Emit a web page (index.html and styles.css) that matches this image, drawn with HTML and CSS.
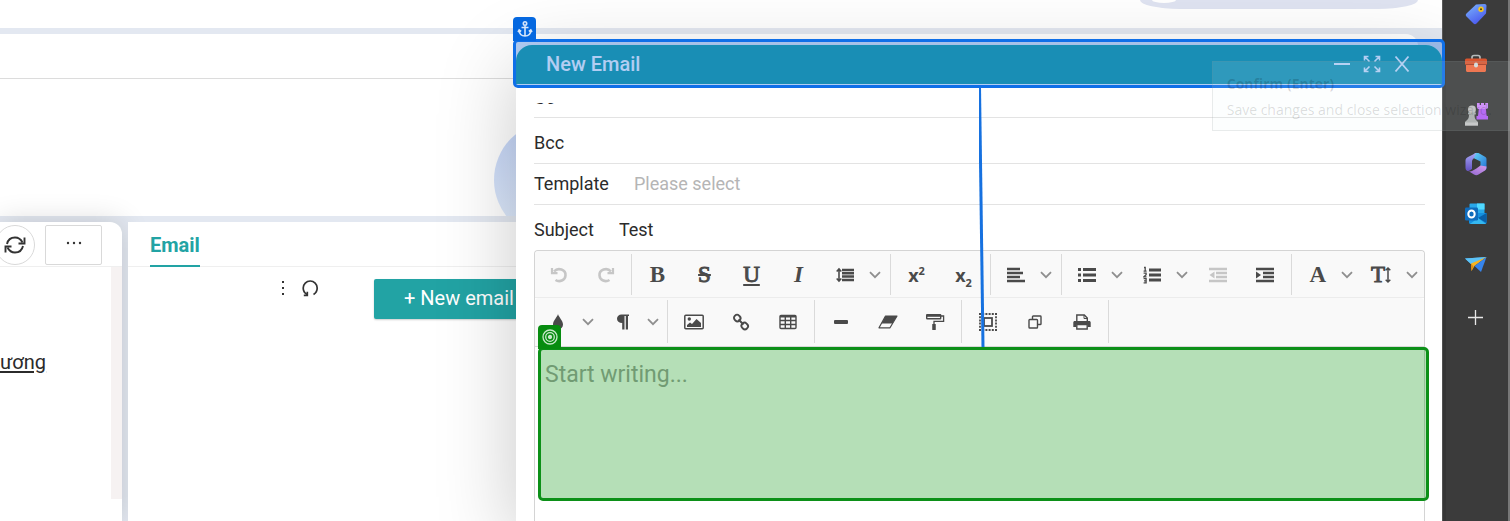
FILE: index.html
```html
<!DOCTYPE html>
<html lang="en">
<head>
<meta charset="utf-8">
<title>New Email</title>
<link rel="stylesheet" href="styles.css">
</head>
<body>
<div class="app">
  <main class="workspace">
    <header class="topbar"><div class="search-pill"><span class="pill-dot"></span></div></header>
    <section class="summary">
      <div class="summary-head"></div>
      <div class="summary-body"><span class="avatar"></span></div>
    </section>
    <div class="panels">
      <section class="side-panel">
        <div class="side-tools">
          <button class="round-btn" aria-label="Refresh"><svg width="22" height="18" viewBox="0 0 22 18" fill="none" stroke="#333" stroke-width="1.9"><path d="M3 8C4 3.500 7.500 1.500 11 1.500c3.500 0 6 2 7.500 5"/><path d="M20.500 1.500v6h-6"/><path d="M19 10c-1 4.500-4.500 6.500-8 6.500-3.500 0-6-2-7.500-5"/><path d="M1.500 16.500v-6h6"/></svg></button>
          <button class="more-btn" aria-label="More"><svg width="16" height="4" viewBox="0 0 16 4" fill="#333"><circle cx="2" cy="2" r="1.200"/><circle cx="8" cy="2" r="1.200"/><circle cx="14" cy="2" r="1.200"/></svg></button>
        </div>
        <div class="side-body">
          <a class="person" href="#">ương</a>
          <span class="scroll-track"></span>
        </div>
      </section>
      <section class="mail-panel">
        <nav class="tabs"><a class="tab" href="#">Email</a></nav>
        <div class="mail-tools">
          <button class="plain-btn" aria-label="Options"><svg width="4" height="16" viewBox="0 0 4 16" fill="#333"><rect x="1" y="1" width="2" height="2"/><rect x="1" y="7" width="2" height="2"/><rect x="1" y="13" width="2" height="2"/></svg></button>
          <button class="plain-btn" aria-label="Reload"><svg width="18" height="18" viewBox="0 0 18 18" fill="none" stroke="#333" stroke-width="1.700"><path d="M12.500 15.500C15 14 16.200 11.800 16.200 9A7 7 0 0 0 2.200 9c0 2.800 1.300 5 3.800 6.500"/><path d="M2.800 16.300h3.500v-3.500"/></svg></button>
          <button class="new-mail">+ New email</button>
        </div>
      </section>
    </div>

    <section class="dialog" role="dialog" aria-labelledby="dialog-title">
      <header class="dialog-head">
        <h1 id="dialog-title" class="dialog-title">New Email</h1>
        <div class="window-controls">
          <button class="win-btn" aria-label="Minimize"><svg width="18" height="18" viewBox="0 0 18 18" stroke="#fff" stroke-width="2"><path d="M1 9h16"/></svg></button>
          <button class="win-btn" aria-label="Expand"><svg width="18" height="18" viewBox="0 0 18 18" fill="none" stroke="#fff" stroke-width="1.600"><path d="M1.500 5.500v-4h4M1.500 1.500l5 5M12.500 1.500h4v4M16.500 1.500l-5 5M1.500 12.500v4h4M1.500 16.500l5-5M12.500 16.500h4v-4M16.500 16.500l-5-5"/></svg></button>
          <button class="win-btn" aria-label="Close"><svg width="18" height="18" viewBox="0 0 18 18" stroke="#fff" stroke-width="1.900"><path d="M2.500 1.500l13 15M15.500 1.500l-13 15"/></svg></button>
        </div>
        <div class="anchor-mark">
          <span class="mark-tag anchor-tag"><svg width="16" height="18" viewBox="0 0 16 18" fill="none" stroke="#d6e6fb" stroke-width="1.600"><circle cx="8" cy="3.500" r="1.700"/><path d="M8 5.500v10.500M4.500 7.500h7M2 10c.3 4 3 6 6 6s5.700-2 6-6M1 12l1.200-2 2 1.400M15 12l-1.200-2-2 1.400"/></svg></span>
        </div>
      </header>
      <div class="fields">
        <div class="field cc-field"><label for="cc">Cc</label><input id="cc" type="text"></div>
        <div class="field bcc-field"><label for="bcc">Bcc</label><input id="bcc" type="text"></div>
        <div class="field template-field"><label for="template">Template</label><select id="template"><option>Please select</option></select></div>
        <div class="field subject-field"><label for="subject">Subject</label><input id="subject" type="text" value="Test"></div>
      </div>
      <div class="editor">
        <div class="tool-row">
          <div class="group">
            <button class="tool dim" aria-label="Undo"><svg width="18" height="18" viewBox="0 0 18 18" fill="none" stroke="currentColor" stroke-width="2.600"><path d="M4 5.500C8 1 16 3.500 15.500 9.500c-.4 5-6 7-10 4.500"/><path d="M2 2v5.200h5.500" stroke-width="2.200"/></svg></button>
            <button class="tool dim" aria-label="Redo"><svg width="18" height="18" viewBox="0 0 18 18" fill="none" stroke="currentColor" stroke-width="2.600"><path d="M14 5.500C10 1 2 3.500 2.500 9.500c.4 5 6 7 10 4.500"/><path d="M16 2v5.200h-5.500" stroke-width="2.200"/></svg></button>
          </div>
          <div class="group">
            <button class="tool glyph" aria-label="Bold">B</button>
            <button class="tool glyph strike" aria-label="Strikethrough">S</button>
            <button class="tool glyph under" aria-label="Underline">U</button>
            <button class="tool glyph ital" aria-label="Italic">I</button>
            <button class="tool drop" aria-label="Line height"><svg width="18" height="16" viewBox="0 0 18 16" fill="none" stroke="currentColor"><path d="M6 3h12M6 6.300h12M6 9.600h12M6 13h12" stroke-width="2.500"/><path d="M3 2v12M.7 4.500L3 2l2.300 2.500M.7 11.500L3 14l2.300-2.500" stroke-width="1.600"/></svg><svg class="chev" width="12" height="8" viewBox="0 0 12 8"><path d="M1 1.200l5 5 5-5"/></svg></button>
          </div>
          <div class="group">
            <button class="tool script" aria-label="Superscript"><span>x<sup>2</sup></span></button>
            <button class="tool script" aria-label="Subscript"><span>x<sub>2</sub></span></button>
          </div>
          <div class="group">
            <button class="tool drop" aria-label="Align"><svg width="18" height="16" viewBox="0 0 18 16" stroke="currentColor" stroke-width="2.600"><path d="M0 2h13M0 6h16M0 10h13M0 14h18"/></svg><svg class="chev" width="12" height="8" viewBox="0 0 12 8"><path d="M1 1.200l5 5 5-5"/></svg></button>
          </div>
          <div class="group">
            <button class="tool drop" aria-label="Bulleted list"><svg width="18" height="16" viewBox="0 0 18 16" stroke="currentColor" stroke-width="2.900"><path d="M5 2.500h13M5 8h13M5 13.500h13M0 2.500h3M0 8h3M0 13.500h3"/></svg><svg class="chev" width="12" height="8" viewBox="0 0 12 8"><path d="M1 1.200l5 5 5-5"/></svg></button>
            <button class="tool drop" aria-label="Numbered list"><svg width="18" height="18" viewBox="0 0 18 18" fill="none" stroke="currentColor"><path d="M6 4h12M6 9h12M6 14h12" stroke-width="2.900"/><path d="M1 1.500h1.200v3.700M.6 5.200h3M.6 7.200h2.500v1.500L.8 10.800h2.700M.6 12.700h2.500v4.200H.6M1 14.800h2" stroke-width="1.300"/></svg><svg class="chev" width="12" height="8" viewBox="0 0 12 8"><path d="M1 1.200l5 5 5-5"/></svg></button>
            <button class="tool dim" aria-label="Outdent"><svg width="18" height="16" viewBox="0 0 18 16" fill="currentColor"><path d="M0 .8h18v2.500H0zM7 4.800h11v2.500H7zM7 8.800h11v2.500H7zM0 12.800h18v2.500H0zM5.500 4.500v7L.5 8z"/></svg></button>
            <button class="tool" aria-label="Indent"><svg width="18" height="16" viewBox="0 0 18 16" fill="currentColor"><path d="M0 .8h18v2.500H0zM7 4.800h11v2.500H7zM7 8.800h11v2.500H7zM0 12.800h18v2.500H0zM0 4.500v7L5 8z"/></svg></button>
          </div>
          <div class="group">
            <button class="tool drop glyph" aria-label="Font color">A<svg class="chev" width="12" height="8" viewBox="0 0 12 8"><path d="M1 1.200l5 5 5-5"/></svg></button>
            <button class="tool drop glyph size" aria-label="Font size"><span class="size-mark">T<svg width="6" height="18" viewBox="0 0 6 18" fill="none" stroke="currentColor" stroke-width="1.500"><path d="M3 2v14M.7 4.300L3 2l2.300 2.300M.7 13.700L3 16l2.300-2.300"/></svg></span><svg class="chev" width="12" height="8" viewBox="0 0 12 8"><path d="M1 1.200l5 5 5-5"/></svg></button>
          </div>
        </div>
        <div class="tool-row">
          <div class="group">
            <button class="tool drop" aria-label="Highlight"><svg width="18" height="18" viewBox="-3 0 18 18"><path fill="currentColor" d="M6 1c.6 3 5 6.500 5 10.500A5 5 0 0 1 6 16.500a5 5 0 0 1-5-5C1 7.500 5.400 4 6 1z"/></svg><svg class="chev" width="12" height="8" viewBox="0 0 12 8"><path d="M1 1.200l5 5 5-5"/></svg></button>
            <button class="tool drop" aria-label="Paragraph format"><svg width="18" height="16" viewBox="-2 0 18 16"><path fill="currentColor" d="M5.500.5H13V2h-1v13.500H9.800V2H8.500v13.500H6.200V9C3 9 1 7.500 1 4.800S3 .5 5.500.5z"/></svg><svg class="chev" width="12" height="8" viewBox="0 0 12 8"><path d="M1 1.200l5 5 5-5"/></svg></button>
          </div>
          <div class="group">
            <button class="tool" aria-label="Image"><svg width="20" height="16" viewBox="0 0 20 16"><rect x=".8" y="1.300" width="18.400" height="13.400" rx="1" fill="none" stroke="currentColor" stroke-width="1.500"/><circle cx="5.300" cy="5" r="1.700" fill="currentColor"/><path fill="currentColor" d="M3 13v-2l3-2.500 2 1.500 4.500-5L17 9v4z"/></svg></button>
            <button class="tool" aria-label="Link"><svg width="18" height="18" viewBox="0 0 18 18" fill="none" stroke="currentColor" stroke-width="1.900"><rect x="2" y="2" width="6.500" height="6" rx="2.800" transform="rotate(45 5.200 5)"/><rect x="9.500" y="10" width="6.500" height="6" rx="2.800" transform="rotate(45 12.700 13)"/><path d="M6.500 6.500l5 5"/></svg></button>
            <button class="tool" aria-label="Table"><svg width="18" height="16" viewBox="0 0 18 16" fill="none" stroke="currentColor" stroke-width="1.400"><rect x="1" y="1.500" width="16" height="13" rx="1"/><path d="M1 2.500h16" stroke-width="2"/><path d="M1 6.500h16M1 10.500h16M6.300 2v12.500M11.700 2v12.500"/></svg></button>
          </div>
          <div class="group">
            <button class="tool" aria-label="Horizontal rule"><svg width="14" height="4" viewBox="0 0 14 4"><rect width="14" height="4" rx="1" fill="currentColor"/></svg></button>
            <button class="tool" aria-label="Clear formatting"><svg width="20" height="14" viewBox="0 0 20 14"><path d="M7.500 1H19l-7 11.800H1L7.500 1z" fill="none" stroke="currentColor" stroke-width="1.200" stroke-linejoin="round"/><path d="M7.500 1H19l-4.500 7.500H3.500z" fill="currentColor"/></svg></button>
            <button class="tool" aria-label="Copy format"><svg width="20" height="18" viewBox="0 0 20 18" fill="none" stroke="currentColor"><rect x="1.700" y="1.700" width="14" height="4" rx=".5" stroke-width="1.400"/><path d="M1.500 2.700h14" stroke-width="2.200"/><path d="M16 3h2.600v5.300H9v3" stroke-width="1.300"/><rect x="7.800" y="11.500" width="2.400" height="5" fill="currentColor"/></svg></button>
          </div>
          <div class="group">
            <button class="tool" aria-label="Select all"><svg width="18" height="18" viewBox="0 0 18 18" fill="none" stroke="currentColor" stroke-width="1.800"><rect x="5" y="5" width="8" height="8"/><path d="M0 1h18M0 17h18M1 0v18M17 0v18" stroke-dasharray="2 1.200"/></svg></button>
            <button class="tool" aria-label="Preview"><svg width="14" height="14" viewBox="0 0 14 14" fill="none" stroke="currentColor" stroke-width="1.400"><rect x="1" y="4.500" width="8.500" height="8.500" rx=".8"/><path d="M4.500 4.500V1.700c0-.4.300-.7.700-.7h7c.4 0 .8.300.8.700v7c0 .4-.4.800-.8.800H9.500"/></svg></button>
            <button class="tool" aria-label="Print"><svg width="18" height="16" viewBox="0 0 18 16"><path d="M3.800 8V1h7.500l3 3v4" fill="none" stroke="currentColor" stroke-width="1.400"/><path d="M11 1v3.500h3.500" fill="none" stroke="currentColor"/><path fill="currentColor" d="M1.800 7h14.400c.9 0 1.500.6 1.500 1.500V13h-3v-2.500H3.300V13h-3V8.500C.3 7.600.9 7 1.800 7z"/><path d="M3.800 10.500h10.400V15H3.800z" fill="none" stroke="currentColor" stroke-width="1.400"/></svg></button>
          </div>
        </div>
        <div class="writing">
          <textarea class="writing-area" placeholder="Start writing..." aria-label="Message"></textarea>
          <div class="target-mark">
            <span class="mark-tag target-tag"><svg width="16" height="16" viewBox="0 0 16 16" fill="none" stroke="#c8e8ca" stroke-width="1.300"><circle cx="8" cy="8" r="7"/><circle cx="8" cy="8" r="4.300"/><circle cx="8" cy="8" r="1.500" fill="#c8e8ca"/></svg></span>
          </div>
        </div>
      </div>
      <svg class="link-line" width="8" height="260" viewBox="4 0 8 260"><path d="M4.500 0L8 260" stroke="#1671e0" stroke-width="3"/></svg>
    </section>
  </main>

  <aside class="dock">
    <button class="dock-btn" aria-label="Shopping"><svg width="24" height="24" viewBox="0 0 24 24"><defs><linearGradient id="tagFill" x1="0" y1="0" x2=".6" y2="1"><stop offset="0" stop-color="#7cb8fc"/><stop offset="1" stop-color="#4a58ee"/></linearGradient></defs><path d="M12 2.500L20.500 2c1.300 0 2 .7 2 2L22 11.500 12.500 21.500c-1 1-2 1-3 0l-7-7c-1-1-1-2 0-3z" fill="url(#tagFill)"/><circle cx="17" cy="7.300" r="2.700" fill="#f3c51e"/><circle cx="17" cy="7.300" r="1" fill="#493a10"/></svg></button>
    <button class="dock-btn" aria-label="Tools"><svg width="24" height="24" viewBox="0 0 24 24"><path d="M8 7V5.500C8 4 9 3.500 10 3.500h4c1 0 2 .5 2 2V7" fill="none" stroke="#b6bbbb" stroke-width="1.700"/><rect x="1" y="6.500" width="22" height="6.500" rx="1.500" fill="#d9552f"/><path d="M2 13h20v5.500c0 .8-.7 1.500-1.500 1.500h-17C2.700 20 2 19.300 2 18.500z" fill="#f0683e"/><path d="M1 12.500h22" stroke="#a8391e"/><rect x="10" y="10.500" width="4" height="5" rx="2" fill="#d5d9d9"/></svg></button>
    <button class="dock-btn" aria-label="Games"><svg width="24" height="24" viewBox="0 0 24 24"><path d="M13 1h2.500v2H17V1h3v2h1.500V1H24v5l-2 1 .7 7H24v3.500H12.500V14H14l.8-7L13 6z" fill="#b15cf3"/><path d="M13 1h2.500v2H17V1h3v2h1.500V1H24v5l-2 1h-7.200L13 6z" fill="#cd86fa"/><circle cx="8" cy="7.500" r="4" fill="#bdbdbd"/><path d="M4 10.500h8v2h-1.500c0 4 .8 5 3.500 7.500v3.500H1V20c3-2.500 4-3.500 4-7.500H4z" fill="#a9abaa"/><path d="M1 20.500h13v3H1z" fill="#c4c4c4"/></svg></button>
    <button class="dock-btn" aria-label="Microsoft 365"><svg width="24" height="24" viewBox="0 0 24 24"><defs><linearGradient id="mTop" x1="0" y1="0" x2="1" y2="1"><stop offset="0" stop-color="#64d5f6"/><stop offset="1" stop-color="#236fd4"/></linearGradient><linearGradient id="mLeft" x1="0" y1="0" x2="0" y2="1"><stop offset="0" stop-color="#a9a8f6"/><stop offset="1" stop-color="#6351c2"/></linearGradient><linearGradient id="mBase" x1="0" y1="1" x2="1" y2="0"><stop offset="0" stop-color="#8c63cf"/><stop offset="1" stop-color="#d59bea"/></linearGradient></defs><path d="M11.500 1h3L21 4.800c1 .6 1.500 1.500 1.500 2.500v9c0 1.700-2 2.700-3.500 1.700l-2.500-1.600V9.500L9 5.800C9 3 10 1.300 11.500 1z" fill="url(#mTop)"/><path d="M12.500.8L4 5C2.300 6 1.500 7 1.500 8.500V16c0 2.500 2.500 3.500 4 2.500L8 17V9.500c0-1 .5-2 1.500-2.700z" fill="url(#mLeft)"/><path d="M2 17.500l8 5c1.500.9 3 .8 4.500 0l6.500-4c1-.8 1.500-2 1.500-4l-6-1-4.500 3.300L8 19c-2 1-4 .5-6-1.500z" fill="url(#mBase)"/></svg></button>
    <button class="dock-btn" aria-label="Outlook"><svg width="24" height="24" viewBox="0 0 24 24"><rect x="5.500" y="1.500" width="15" height="12" rx="1" fill="#28a8ea"/><path d="M13 1.500h7.500v6H13z" fill="#50d9ff"/><path d="M5 11h17.500v9.500c0 .8-.5 1.500-1.500 1.500H6.500c-1 0-1.500-.7-1.500-1.500z" fill="#1490df"/><path d="M22.500 11v10L14 16z" fill="#0a5fa8"/><path d="M6 22l8-6 8 6z" fill="#35b8f1"/><rect x="1" y="5.500" width="13" height="13" rx="1.200" fill="#0f6cbd"/><ellipse cx="7.500" cy="12" rx="3.200" ry="3.500" fill="none" stroke="#fff" stroke-width="2"/></svg></button>
    <button class="dock-btn" aria-label="Drop"><svg width="24" height="24" viewBox="0 0 24 24"><path d="M1 6.500L22.500 5 8 13z" fill="#47aef3"/><path d="M1 6.500l21.500-1.500L7 12z" fill="#5cc3f7"/><path d="M22.500 5L7 11.500 7.500 19l3-5z" fill="#f7b422"/><path d="M7 11.500L7.500 19l2-4.500z" fill="#d78814"/><path d="M22.500 5L10.500 14l6.500 6z" fill="#3684ec"/></svg></button>
    <button class="dock-btn" aria-label="Add"><svg width="24" height="24" viewBox="0 0 24 24" stroke="#e8e8e8" stroke-width="1.300"><path d="M11.500 4v15M4 11.500h15"/></svg></button>
  </aside>

  <div class="tooltip" role="tooltip"><strong class="tip-title">Confirm (Enter)</strong><span class="tip-text">Save changes and close selection wizard.</span></div>
</div>
</body>
</html>
```
FILE: styles.css
```css
* { box-sizing: border-box; }
body { margin: 0; font-family: Roboto, sans-serif; color: #2b2b2b; }
button, input, select, textarea { font: inherit; color: inherit; border: 0; padding: 0; margin: 0; background: none; outline: 0; }
svg { display: block; flex: none; }

.app { display: grid; grid-template-columns: 1fr 68px; height: 100vh; position: relative; overflow: hidden; }
.workspace { position: relative; min-width: 0; clip-path: inset(0 -4px 0 0); display: flex; flex-direction: column; background: #e3e8f1; }

.topbar { height: 28px; flex: none; background: #fff; display: flex; justify-content: flex-end; align-items: flex-start; padding-right: 24px; }
.search-pill { width: 278px; height: 9px; border-radius: 0 0 40px 40px / 0 0 9px 9px; background: #dfe3f1; padding-left: 12px; }
.pill-dot { display: block; width: 24px; height: 3px; border-radius: 0 0 12px 12px / 0 0 3px 3px; background: #fff; }

.summary { margin: 6px 24px 6px 0; height: 182px; flex: none; background: #fff; border-radius: 0 12px 0 0; display: flex; flex-direction: column; }
.summary-head { height: 45px; border-bottom: 1px solid #dcdcdc; }
.summary-body { flex: 1; overflow: hidden; padding: 42px 0 0 494px; }
.avatar { display: block; width: 118px; height: 118px; border-radius: 50%; background: linear-gradient(#c3d4f8, #e2edfc); }

.panels { flex: 1; display: grid; grid-template-columns: 122px 1fr; gap: 6px; min-height: 0; }
.side-panel { background: #fff; border-radius: 0 12px 0 0; box-shadow: 0 0 30px rgba(0, 0, 0, .16); display: flex; flex-direction: column; overflow: hidden; }
.side-tools { height: 45px; flex: none; border-bottom: 1px solid #efefef; display: flex; gap: 10px; padding-top: 3px; }
.round-btn, .more-btn { height: 40px; border: 1px solid #d9d9d9; display: grid; place-items: center; flex: none; }
.round-btn { width: 40px; margin-left: -5px; border-radius: 50%; }
.more-btn { width: 57px; border-radius: 2px; }
.more-btn svg { margin-bottom: 4px; }
.side-body { flex: 1; display: flex; justify-content: space-between; }
.person { margin-top: 83px; font-size: 20px; line-height: 24px; color: #2b2b2b; text-underline-offset: 2px; }
.scroll-track { width: 11px; height: 232px; background: #f6f2f2; }

.mail-panel { background: #fff; min-width: 0; }
.tabs { height: 45px; border-bottom: 1px solid #efefef; padding-left: 22px; display: flex; }
.tab { height: 45px; border-bottom: 2px solid #22a3a4; color: #22a3a4; font-size: 20px; font-weight: 700; line-height: 46px; text-decoration: none; }
.mail-tools { display: flex; align-items: flex-start; gap: 16px; padding: 12px 0 0 153px; }
.plain-btn { height: 18px; display: grid; place-items: center; }
.new-mail { width: 170px; height: 40px; margin-left: 39px; padding: 0 0 2px 30px; text-align: left; background: #22a3a4; color: #fff; font-size: 20px; border-radius: 2px; box-shadow: 0 1px 2px rgba(0, 0, 0, .2); }

.dialog { position: absolute; top: 45px; right: 0; bottom: 0; left: 516px; display: flex; flex-direction: column; background: #fff; border-radius: 16px 16px 0 0; box-shadow: 0 20px 80px rgba(0, 0, 0, .22); }
.dialog-head { position: relative; height: 39px; flex: none; display: flex; align-items: center; justify-content: space-between; padding: 0 31px 2px 30px; background: #24a5a6; border-radius: 16px 16px 0 0; }
.dialog-title { margin: 0; font-size: 20px; font-weight: 500; color: #fff; }
.window-controls { display: flex; gap: 12px; }
.anchor-mark { position: absolute; inset: -6px -3px -4px -3px; border: 3px solid #0f6fe8; border-radius: 5px; background: rgba(0, 88, 215, .3); }
.mark-tag { position: absolute; display: grid; place-items: center; width: 23px; height: 24px; border-radius: 4px 4px 0 0; }
.anchor-tag { top: -25px; left: -3px; background: #0568e0; }
.link-line { position: absolute; top: 42px; left: 50%; }

.fields { padding: 19px 17px 0 18px; font-size: 18px; line-height: 20px; }
.field { display: flex; align-items: center; gap: 25px; border-bottom: 1px solid #e3e3e3; }
.field input, .field select { flex: 1; min-width: 0; height: 20px; appearance: none; }
.cc-field { height: 15px; align-items: flex-end; overflow: hidden; padding-bottom: 9px; }
.bcc-field { height: 46px; padding-top: 5px; }
.template-field { height: 41px; }
.field select { color: #b5b5b5; }
.subject-field { height: 45px; padding-top: 4px; border: 0; }

.editor { flex: 1; min-height: 0; margin: 0 17px 0 18px; border: 1px solid #d4d4d4; border-bottom: 0; border-radius: 4px 4px 0 0; }
.tool-row { display: flex; height: 49px; padding: 2px 0 3px; background: #f9f9f9; border-bottom: 1px solid #d8d8d8; border-radius: 4px 4px 0 0; }
.tool-row:first-child { height: 47px; padding: 3px 0 2px; border-color: #ececec; }
.group { display: flex; align-items: center; padding: 0 3px 0 2px; border-right: 1px solid #dadada; }
.group:first-child { padding: 0 2px 0 0; }
.tool-row:first-child .group:last-child { padding-right: 0; border: 0; }
.tool { width: 47px; height: 38px; display: flex; align-items: center; justify-content: center; color: #4a4a4a; }
.dim { color: #c6c6c6; }
.drop { width: 65px; justify-content: flex-end; gap: 15px; padding-right: 6px; }
.chev { fill: none; stroke: #8f8f8f; stroke-width: 1.800; }
.glyph { font: 700 23px "Liberation Serif", serif; }
.strike { font-weight: 400; text-decoration: line-through; text-decoration-thickness: 2px; }
.under { font-weight: 400; text-decoration: underline; text-decoration-thickness: 2px; text-underline-offset: 2px; }
.strike, .under, .size { -webkit-text-stroke: 1px currentColor; }
.ital { font-style: italic; }
.size { font-weight: 400; }
.size-mark { display: flex; align-items: center; }
.script { font: 700 18px "Noto Sans", sans-serif; }
.script sup, .script sub { font-size: 11px; line-height: 0; }

.writing { position: relative; height: 154px; }
.writing-area { display: block; width: 100%; height: 100%; padding: 14px 10px; font-size: 23px; line-height: 28px; resize: none; }
.writing-area::placeholder { color: #a0a0a0; opacity: 1; }
.target-mark { position: absolute; inset: 0 -5px 0 3px; border: 3px solid #0c9018; border-radius: 5px; background: rgba(0, 145, 8, .29); pointer-events: none; }
.target-tag { top: -25px; left: -3px; background: #078c10; }

.dock { display: flex; flex-direction: column; align-items: center; gap: 26px; padding-top: 2px; background: #3b3b3b; border-left: 1px solid #5a5a5a; border-right: 2px solid #777; }
.dock-btn { display: block; height: 24px; }
.dock-btn:last-child { margin-top: 4px; }

.tooltip { position: absolute; top: 61px; right: 0; padding: 12px 17px 10px 14px; border: 1px solid rgba(128, 138, 138, .16); background: rgba(232, 250, 246, .11); font-family: "Open Sans", sans-serif; font-size: 14px; color: rgba(0, 0, 0, .16); display: flex; flex-direction: column; gap: 6px; pointer-events: none; }
.tip-title { line-height: 20px; }
.tip-text { line-height: 20px; white-space: nowrap; color: rgba(0, 0, 0, .14); }
```
